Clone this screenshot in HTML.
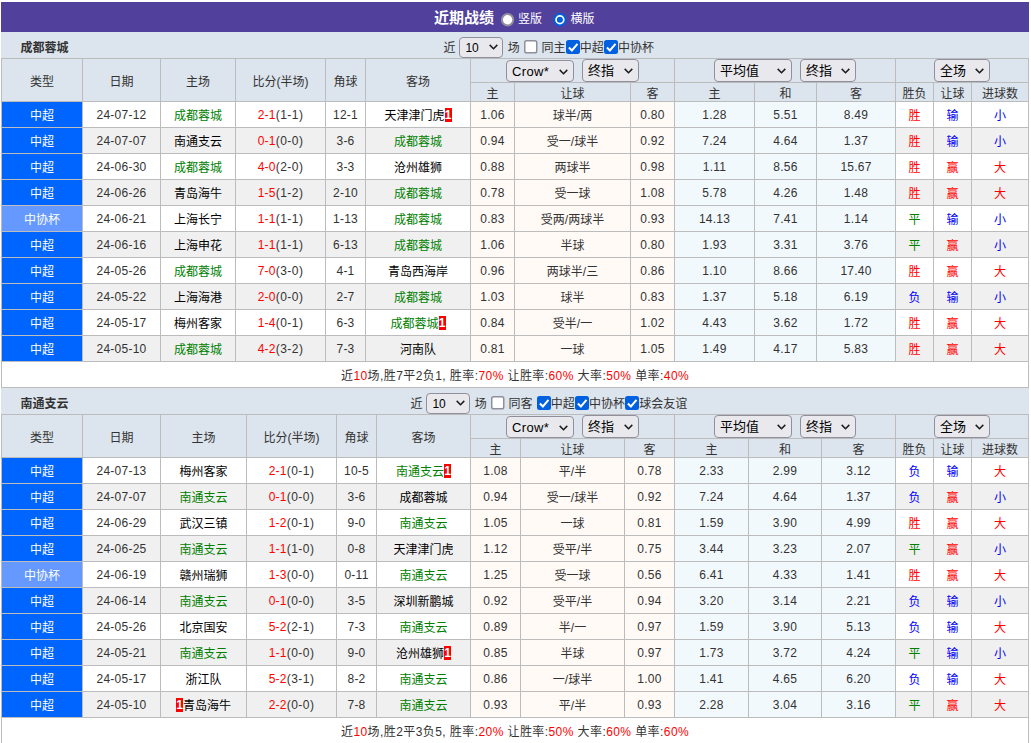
<!DOCTYPE html>
<html lang="zh-CN"><head><meta charset="utf-8"><title>近期战绩</title>
<style>
html,body{margin:0;padding:0;background:#fff;}
body{font-family:"Liberation Sans","Noto Sans CJK SC",sans-serif;font-size:12px;color:#333;width:1031px;height:743px;overflow:hidden;position:relative;}
#wrap{position:absolute;left:1px;top:2px;width:1028px;}
.title{height:30px;background:#51409c;color:#fff;position:relative;}
.title .tt{position:absolute;left:433px;top:1px;line-height:30px;font-size:15px;font-weight:bold;}
.title .rl{position:absolute;top:1px;line-height:33px;font-size:12px;}
.rd{position:absolute;top:11px;width:13px;height:13px;box-sizing:border-box;border-radius:50%;border:2px solid #8f8f9d;background:#fff;}
.rd.on{border:2px solid #0060df;}
.rd.on i{position:absolute;left:2px;top:2px;width:5px;height:5px;border-radius:50%;background:#0060df;}
.sh{height:26px;background:#dce4ed;position:relative;}
.sh .tn{position:absolute;left:19.6px;top:2.5px;line-height:26px;font-weight:bold;color:#333;}
.sh .ctl{position:absolute;top:3px;height:26px;line-height:26px;text-align:left;white-space:pre;color:#333;}
table{border-collapse:separate;border-spacing:0;table-layout:fixed;width:1028px;border-right:1px solid #bcbcbc;border-bottom:1px solid #bcbcbc;}
th,td{border-left:1px solid #bcbcbc;border-top:1px solid #bcbcbc;padding:0;text-align:center;font-weight:normal;box-sizing:border-box;overflow:hidden;white-space:nowrap;}
th{background:#dce4ed;color:#333;}
tr.h1{height:24px;}
tr.h2{height:19px;}
tr.h2 th,th[rowspan]{padding-top:4px;line-height:14px;}
tr.od,tr.ev,tr.sm{height:26px;}
tr.od td{background:#fff;}
tr.ev td{background:#f0f0f0;}
tr td.ah{background:#fffaf6;}
tr td.eu{background:#f2f9fd;}
tr td.lg{background:#0064ff;color:#fff;}
tr td.lg2{background:#6699ff;color:#fff;}
td.tm{color:#000;}
td.g{color:#008000;}
.sc{color:#f00;}
.hs{letter-spacing:0.45px;}
.r{color:#f00;}
.b{color:#00f;}
td.g2,.g2{color:#008000;}
tr.sm td{background:#fff;color:#333;letter-spacing:0.42px;}
.rc{font-style:normal;background:#f00;color:#fff;display:inline-block;position:relative;top:-1px;width:7px;height:14px;line-height:14px;text-align:center;font-weight:bold;}
.sel{display:inline-block;box-sizing:border-box;height:22px;line-height:21px;top:0.5px;border:1px solid #8f8f9d;border-radius:4px;background:#e9e9ed;color:#000;font-size:13px;text-align:left;padding-left:5px;position:relative;vertical-align:middle;white-space:nowrap;}
.sel.s12{font-size:12px;height:21px;line-height:20px;margin:0 1px 0 0.6px;top:-1.2px;}
.sel.s12 .cv{top:6px;right:4.7px;}
.sel .cv{position:absolute;right:5.4px;top:7.5px;}
.gap{display:inline-block;width:8px;}
.sel.cj{height:23px;line-height:22px;top:0;}
.sel.cj .cv{top:8px;}
.cb{display:inline-block;box-sizing:border-box;width:13px;height:13px;border:1px solid #8f8f9d;border-radius:2px;background:#fff;vertical-align:middle;position:relative;margin:0 0.7px 0 0;top:-2px;}
.cb.c0{margin-left:1.4px;border:0;background:none;}
.cb.c0 svg{left:-0.5px;}
.cb.on{border:0;background:#0060df;margin-left:0.5px;margin-right:-0.3px;width:14px;height:14px;border-radius:2.5px;top:-1.5px;}
.g1{display:inline-block;width:0.7px;}
.cb svg{position:absolute;left:0;top:0;}
.rsv{position:absolute;left:500px;top:0;}
td.n{letter-spacing:0.25px;}
.sel.lt{letter-spacing:0.35px;}

</style></head><body>
<div id="wrap">
<div class="title"><b class="tt">近期战绩</b><svg class="rsv" width="80" height="30" viewBox="0 0 80 30"><circle cx="6.6" cy="17.8" r="5.7" fill="#fff" stroke="#8f8f9d" stroke-width="2"/><circle cx="58.9" cy="17.8" r="5.7" fill="#fff" stroke="#0060df" stroke-width="2"/><circle cx="58.9" cy="17.8" r="3" fill="#0060df"/></svg><span class="rl" style="left:517px">竖版</span><span class="rl" style="left:569.5px">横版</span></div>
<div class="sh"><b class="tn">成都蓉城</b><div class="ctl" style="left:442.5px">近 <span class="sel s12" style="width:44px">10<svg class="cv" width="9" height="6" viewBox="0 0 9 6"><path d="M0.7 0.9 L4.5 4.7 L8.3 0.9" fill="none" stroke="#1b1b1b" stroke-width="1.5"/></svg></span> 场 <span class="cb c0"><svg width="14" height="14" viewBox="0 0 14 14"><rect x="0.75" y="0.75" width="12" height="12" rx="1.8" fill="#fff" stroke="#8f8f9d" stroke-width="1.5"/></svg></span> 同主<span class="cb on"><svg width="14" height="14" viewBox="0 0 14 14"><path d="M2.9 7.5 L5.9 10.5 L11.5 3.8" fill="none" stroke="#fff" stroke-width="2"/></svg></span>中超<span class="cb on"><svg width="14" height="14" viewBox="0 0 14 14"><path d="M2.9 7.5 L5.9 10.5 L11.5 3.8" fill="none" stroke="#fff" stroke-width="2"/></svg></span>中协杯</div></div>
<table><colgroup><col style="width:81px"><col style="width:78px"><col style="width:75px"><col style="width:90px"><col style="width:40px"><col style="width:105px"><col style="width:44px"><col style="width:116px"><col style="width:44px"><col style="width:80px"><col style="width:62px"><col style="width:79px"><col style="width:38px"><col style="width:38px"><col style="width:57px"></colgroup>
<tr class="h1"><th rowspan="2">类型</th><th rowspan="2">日期</th><th rowspan="2">主场</th><th rowspan="2">比分(半场)</th><th rowspan="2">角球</th><th rowspan="2">客场</th><th colspan="3"><span class="sel lt" style="width:68px">Crow*<svg class="cv" width="9" height="6" viewBox="0 0 9 6"><path d="M0.7 0.9 L4.5 4.7 L8.3 0.9" fill="none" stroke="#1b1b1b" stroke-width="1.5"/></svg></span><i class="gap"></i><span class="sel cj" style="width:57px">终指<svg class="cv" width="9" height="6" viewBox="0 0 9 6"><path d="M0.7 0.9 L4.5 4.7 L8.3 0.9" fill="none" stroke="#1b1b1b" stroke-width="1.5"/></svg></span></th><th colspan="3"><span class="sel cj" style="width:78px">平均值<svg class="cv" width="9" height="6" viewBox="0 0 9 6"><path d="M0.7 0.9 L4.5 4.7 L8.3 0.9" fill="none" stroke="#1b1b1b" stroke-width="1.5"/></svg></span><i class="gap"></i><span class="sel cj" style="width:56px">终指<svg class="cv" width="9" height="6" viewBox="0 0 9 6"><path d="M0.7 0.9 L4.5 4.7 L8.3 0.9" fill="none" stroke="#1b1b1b" stroke-width="1.5"/></svg></span></th><th colspan="3"><span class="sel cj" style="width:56px">全场<svg class="cv" width="9" height="6" viewBox="0 0 9 6"><path d="M0.7 0.9 L4.5 4.7 L8.3 0.9" fill="none" stroke="#1b1b1b" stroke-width="1.5"/></svg></span></th></tr>
<tr class="h2"><th>主</th><th>让球</th><th>客</th><th>主</th><th>和</th><th>客</th><th>胜负</th><th>让球</th><th>进球数</th></tr>
<tr class="od"><td class="lg">中超</td><td class="n">24-07-12</td><td class="tm g">成都蓉城</td><td class="n"><span class="sc">2-1</span><span class="hs">(1-1)</span></td><td class="n">12-1</td><td class="tm">天津津门虎<em class="rc">1</em></td><td class="ah n">1.06</td><td class="ah">球半/两</td><td class="ah n">0.80</td><td class="eu n">1.28</td><td class="eu n">5.51</td><td class="eu n">8.49</td><td class="r">胜</td><td class="b">输</td><td class="b">小</td></tr>
<tr class="ev"><td class="lg">中超</td><td class="n">24-07-07</td><td class="tm">南通支云</td><td class="n"><span class="sc">0-1</span><span class="hs">(0-0)</span></td><td class="n">3-6</td><td class="tm g">成都蓉城</td><td class="ah n">0.94</td><td class="ah">受一/球半</td><td class="ah n">0.92</td><td class="eu n">7.24</td><td class="eu n">4.64</td><td class="eu n">1.37</td><td class="r">胜</td><td class="b">输</td><td class="b">小</td></tr>
<tr class="od"><td class="lg">中超</td><td class="n">24-06-30</td><td class="tm g">成都蓉城</td><td class="n"><span class="sc">4-0</span><span class="hs">(2-0)</span></td><td class="n">3-3</td><td class="tm">沧州雄狮</td><td class="ah n">0.88</td><td class="ah">两球半</td><td class="ah n">0.98</td><td class="eu n">1.11</td><td class="eu n">8.56</td><td class="eu n">15.67</td><td class="r">胜</td><td class="r">赢</td><td class="r">大</td></tr>
<tr class="ev"><td class="lg">中超</td><td class="n">24-06-26</td><td class="tm">青岛海牛</td><td class="n"><span class="sc">1-5</span><span class="hs">(1-2)</span></td><td class="n">2-10</td><td class="tm g">成都蓉城</td><td class="ah n">0.78</td><td class="ah">受一球</td><td class="ah n">1.08</td><td class="eu n">5.78</td><td class="eu n">4.26</td><td class="eu n">1.48</td><td class="r">胜</td><td class="r">赢</td><td class="r">大</td></tr>
<tr class="od"><td class="lg2">中协杯</td><td class="n">24-06-21</td><td class="tm">上海长宁</td><td class="n"><span class="sc">1-1</span><span class="hs">(1-1)</span></td><td class="n">1-13</td><td class="tm g">成都蓉城</td><td class="ah n">0.83</td><td class="ah">受两/两球半</td><td class="ah n">0.93</td><td class="eu n">14.13</td><td class="eu n">7.41</td><td class="eu n">1.14</td><td class="g">平</td><td class="b">输</td><td class="b">小</td></tr>
<tr class="ev"><td class="lg">中超</td><td class="n">24-06-16</td><td class="tm">上海申花</td><td class="n"><span class="sc">1-1</span><span class="hs">(1-1)</span></td><td class="n">6-13</td><td class="tm g">成都蓉城</td><td class="ah n">1.06</td><td class="ah">半球</td><td class="ah n">0.80</td><td class="eu n">1.93</td><td class="eu n">3.31</td><td class="eu n">3.76</td><td class="g">平</td><td class="r">赢</td><td class="b">小</td></tr>
<tr class="od"><td class="lg">中超</td><td class="n">24-05-26</td><td class="tm g">成都蓉城</td><td class="n"><span class="sc">7-0</span><span class="hs">(3-0)</span></td><td class="n">4-1</td><td class="tm">青岛西海岸</td><td class="ah n">0.96</td><td class="ah">两球半/三</td><td class="ah n">0.86</td><td class="eu n">1.10</td><td class="eu n">8.66</td><td class="eu n">17.40</td><td class="r">胜</td><td class="r">赢</td><td class="r">大</td></tr>
<tr class="ev"><td class="lg">中超</td><td class="n">24-05-22</td><td class="tm">上海海港</td><td class="n"><span class="sc">2-0</span><span class="hs">(0-0)</span></td><td class="n">2-7</td><td class="tm g">成都蓉城</td><td class="ah n">1.03</td><td class="ah">球半</td><td class="ah n">0.83</td><td class="eu n">1.37</td><td class="eu n">5.18</td><td class="eu n">6.19</td><td class="b">负</td><td class="b">输</td><td class="b">小</td></tr>
<tr class="od"><td class="lg">中超</td><td class="n">24-05-17</td><td class="tm">梅州客家</td><td class="n"><span class="sc">1-4</span><span class="hs">(0-1)</span></td><td class="n">6-3</td><td class="tm g">成都蓉城<em class="rc">1</em></td><td class="ah n">0.84</td><td class="ah">受半/一</td><td class="ah n">1.02</td><td class="eu n">4.43</td><td class="eu n">3.62</td><td class="eu n">1.72</td><td class="r">胜</td><td class="r">赢</td><td class="r">大</td></tr>
<tr class="ev"><td class="lg">中超</td><td class="n">24-05-10</td><td class="tm g">成都蓉城</td><td class="n"><span class="sc">4-2</span><span class="hs">(3-2)</span></td><td class="n">7-3</td><td class="tm">河南队</td><td class="ah n">0.81</td><td class="ah">一球</td><td class="ah n">1.05</td><td class="eu n">1.49</td><td class="eu n">4.17</td><td class="eu n">5.83</td><td class="r">胜</td><td class="r">赢</td><td class="r">大</td></tr>
<tr class="sm"><td colspan="15">近<span class="r">10</span>场,胜7平2负1, 胜率:<span class="r">70%</span> 让胜率:<span class="r">60%</span> 大率:<span class="r">50%</span> 单率:<span class="r">40%</span></td></tr>
</table>
<div class="sh"><b class="tn">南通支云</b><div class="ctl" style="left:409.5px">近 <span class="sel s12" style="width:44px">10<svg class="cv" width="9" height="6" viewBox="0 0 9 6"><path d="M0.7 0.9 L4.5 4.7 L8.3 0.9" fill="none" stroke="#1b1b1b" stroke-width="1.5"/></svg></span> 场 <span class="cb c0"><svg width="14" height="14" viewBox="0 0 14 14"><rect x="0.75" y="0.75" width="12" height="12" rx="1.8" fill="#fff" stroke="#8f8f9d" stroke-width="1.5"/></svg></span> 同客 <i class="g1"></i><span class="cb on"><svg width="14" height="14" viewBox="0 0 14 14"><path d="M2.9 7.5 L5.9 10.5 L11.5 3.8" fill="none" stroke="#fff" stroke-width="2"/></svg></span>中超<span class="cb on"><svg width="14" height="14" viewBox="0 0 14 14"><path d="M2.9 7.5 L5.9 10.5 L11.5 3.8" fill="none" stroke="#fff" stroke-width="2"/></svg></span>中协杯<span class="cb on"><svg width="14" height="14" viewBox="0 0 14 14"><path d="M2.9 7.5 L5.9 10.5 L11.5 3.8" fill="none" stroke="#fff" stroke-width="2"/></svg></span>球会友谊</div></div>
<table><colgroup><col style="width:81px"><col style="width:78px"><col style="width:86px"><col style="width:90px"><col style="width:40px"><col style="width:94px"><col style="width:50px"><col style="width:104px"><col style="width:50px"><col style="width:74px"><col style="width:73px"><col style="width:74px"><col style="width:38px"><col style="width:38px"><col style="width:57px"></colgroup>
<tr class="h1"><th rowspan="2">类型</th><th rowspan="2">日期</th><th rowspan="2">主场</th><th rowspan="2">比分(半场)</th><th rowspan="2">角球</th><th rowspan="2">客场</th><th colspan="3"><span class="sel lt" style="width:68px">Crow*<svg class="cv" width="9" height="6" viewBox="0 0 9 6"><path d="M0.7 0.9 L4.5 4.7 L8.3 0.9" fill="none" stroke="#1b1b1b" stroke-width="1.5"/></svg></span><i class="gap"></i><span class="sel cj" style="width:57px">终指<svg class="cv" width="9" height="6" viewBox="0 0 9 6"><path d="M0.7 0.9 L4.5 4.7 L8.3 0.9" fill="none" stroke="#1b1b1b" stroke-width="1.5"/></svg></span></th><th colspan="3"><span class="sel cj" style="width:78px">平均值<svg class="cv" width="9" height="6" viewBox="0 0 9 6"><path d="M0.7 0.9 L4.5 4.7 L8.3 0.9" fill="none" stroke="#1b1b1b" stroke-width="1.5"/></svg></span><i class="gap"></i><span class="sel cj" style="width:56px">终指<svg class="cv" width="9" height="6" viewBox="0 0 9 6"><path d="M0.7 0.9 L4.5 4.7 L8.3 0.9" fill="none" stroke="#1b1b1b" stroke-width="1.5"/></svg></span></th><th colspan="3"><span class="sel cj" style="width:56px">全场<svg class="cv" width="9" height="6" viewBox="0 0 9 6"><path d="M0.7 0.9 L4.5 4.7 L8.3 0.9" fill="none" stroke="#1b1b1b" stroke-width="1.5"/></svg></span></th></tr>
<tr class="h2"><th>主</th><th>让球</th><th>客</th><th>主</th><th>和</th><th>客</th><th>胜负</th><th>让球</th><th>进球数</th></tr>
<tr class="od"><td class="lg">中超</td><td class="n">24-07-13</td><td class="tm">梅州客家</td><td class="n"><span class="sc">2-1</span><span class="hs">(0-1)</span></td><td class="n">10-5</td><td class="tm g">南通支云<em class="rc">1</em></td><td class="ah n">1.08</td><td class="ah">平/半</td><td class="ah n">0.78</td><td class="eu n">2.33</td><td class="eu n">2.99</td><td class="eu n">3.12</td><td class="b">负</td><td class="b">输</td><td class="r">大</td></tr>
<tr class="ev"><td class="lg">中超</td><td class="n">24-07-07</td><td class="tm g">南通支云</td><td class="n"><span class="sc">0-1</span><span class="hs">(0-0)</span></td><td class="n">3-6</td><td class="tm">成都蓉城</td><td class="ah n">0.94</td><td class="ah">受一/球半</td><td class="ah n">0.92</td><td class="eu n">7.24</td><td class="eu n">4.64</td><td class="eu n">1.37</td><td class="b">负</td><td class="r">赢</td><td class="b">小</td></tr>
<tr class="od"><td class="lg">中超</td><td class="n">24-06-29</td><td class="tm">武汉三镇</td><td class="n"><span class="sc">1-2</span><span class="hs">(0-1)</span></td><td class="n">9-0</td><td class="tm g">南通支云</td><td class="ah n">1.05</td><td class="ah">一球</td><td class="ah n">0.81</td><td class="eu n">1.59</td><td class="eu n">3.90</td><td class="eu n">4.99</td><td class="r">胜</td><td class="r">赢</td><td class="r">大</td></tr>
<tr class="ev"><td class="lg">中超</td><td class="n">24-06-25</td><td class="tm g">南通支云</td><td class="n"><span class="sc">1-1</span><span class="hs">(1-0)</span></td><td class="n">0-8</td><td class="tm">天津津门虎</td><td class="ah n">1.12</td><td class="ah">受平/半</td><td class="ah n">0.75</td><td class="eu n">3.44</td><td class="eu n">3.23</td><td class="eu n">2.07</td><td class="g">平</td><td class="r">赢</td><td class="b">小</td></tr>
<tr class="od"><td class="lg2">中协杯</td><td class="n">24-06-19</td><td class="tm">赣州瑞狮</td><td class="n"><span class="sc">1-3</span><span class="hs">(0-0)</span></td><td class="n">0-11</td><td class="tm g">南通支云</td><td class="ah n">1.25</td><td class="ah">受一球</td><td class="ah n">0.56</td><td class="eu n">6.41</td><td class="eu n">4.33</td><td class="eu n">1.41</td><td class="r">胜</td><td class="r">赢</td><td class="r">大</td></tr>
<tr class="ev"><td class="lg">中超</td><td class="n">24-06-14</td><td class="tm g">南通支云</td><td class="n"><span class="sc">0-1</span><span class="hs">(0-0)</span></td><td class="n">3-5</td><td class="tm">深圳新鹏城</td><td class="ah n">0.92</td><td class="ah">受平/半</td><td class="ah n">0.94</td><td class="eu n">3.20</td><td class="eu n">3.14</td><td class="eu n">2.21</td><td class="b">负</td><td class="b">输</td><td class="b">小</td></tr>
<tr class="od"><td class="lg">中超</td><td class="n">24-05-26</td><td class="tm">北京国安</td><td class="n"><span class="sc">5-2</span><span class="hs">(2-1)</span></td><td class="n">7-3</td><td class="tm g">南通支云</td><td class="ah n">0.89</td><td class="ah">半/一</td><td class="ah n">0.97</td><td class="eu n">1.59</td><td class="eu n">3.90</td><td class="eu n">5.13</td><td class="b">负</td><td class="b">输</td><td class="r">大</td></tr>
<tr class="ev"><td class="lg">中超</td><td class="n">24-05-21</td><td class="tm g">南通支云</td><td class="n"><span class="sc">1-1</span><span class="hs">(0-0)</span></td><td class="n">9-0</td><td class="tm">沧州雄狮<em class="rc">1</em></td><td class="ah n">0.85</td><td class="ah">半球</td><td class="ah n">0.97</td><td class="eu n">1.73</td><td class="eu n">3.72</td><td class="eu n">4.24</td><td class="g">平</td><td class="b">输</td><td class="b">小</td></tr>
<tr class="od"><td class="lg">中超</td><td class="n">24-05-17</td><td class="tm">浙江队</td><td class="n"><span class="sc">5-2</span><span class="hs">(3-1)</span></td><td class="n">8-2</td><td class="tm g">南通支云</td><td class="ah n">0.86</td><td class="ah">一/球半</td><td class="ah n">1.00</td><td class="eu n">1.41</td><td class="eu n">4.65</td><td class="eu n">6.20</td><td class="b">负</td><td class="b">输</td><td class="r">大</td></tr>
<tr class="ev"><td class="lg">中超</td><td class="n">24-05-10</td><td class="tm"><em class="rc">1</em>青岛海牛</td><td class="n"><span class="sc">2-2</span><span class="hs">(0-0)</span></td><td class="n">7-8</td><td class="tm g">南通支云</td><td class="ah n">0.93</td><td class="ah">平/半</td><td class="ah n">0.93</td><td class="eu n">2.28</td><td class="eu n">3.04</td><td class="eu n">3.16</td><td class="g">平</td><td class="r">赢</td><td class="r">大</td></tr>
<tr class="sm"><td colspan="15">近<span class="r">10</span>场,胜2平3负5, 胜率:<span class="r">20%</span> 让胜率:<span class="r">50%</span> 大率:<span class="r">60%</span> 单率:<span class="r">60%</span></td></tr>
</table>
</div>
</body></html>
